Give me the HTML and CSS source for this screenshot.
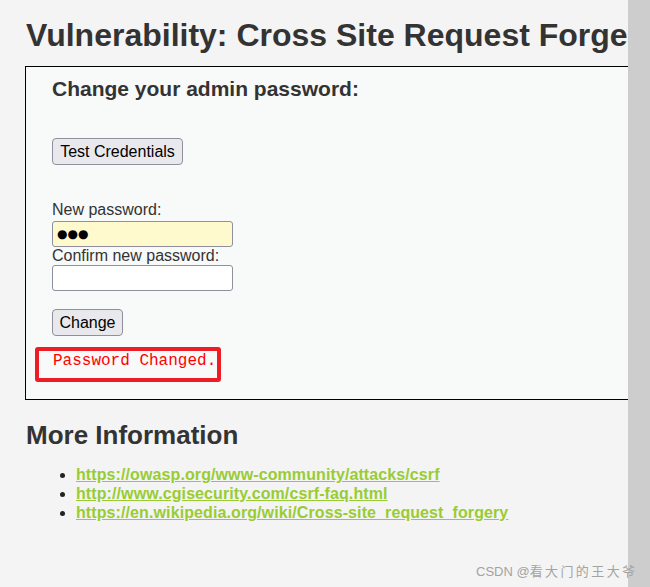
FILE: index.html
```html
<!DOCTYPE html>
<html>
<head>
<meta charset="utf-8">
<link rel="stylesheet" href="styles.css">
</head>
<body>
<div class="layout">
  <div class="main">
    <h1 class="title">Vulnerability: Cross Site Request Forgery (CSRF)</h1>
    <div class="vulnerable">
      <form class="form">
        <h3 class="subtitle">Change your admin password:</h3>
        <button class="btn btn-test" type="button">Test Credentials</button>
        <label class="field-label">New password:</label>
        <input class="field field-filled" type="text" value="●●●">
        <label class="field-label">Confirm new password:</label>
        <input class="field" type="password">
        <button class="btn btn-change" type="button">Change</button>
      </form>
      <div class="result"><pre class="result-text">Password Changed.</pre></div>
    </div>
    <h2 class="more">More Information</h2>
    <ul class="links">
      <li><a href="#">https://owasp.org/www-community/attacks/csrf</a></li>
      <li><a href="#">http://www.cgisecurity.com/csrf-faq.html</a></li>
      <li><a href="#">https://en.wikipedia.org/wiki/Cross-site_request_forgery</a></li>
    </ul>
  </div>
  <div class="scrollbar"></div>
</div>
<div class="watermark">CSDN @<span class="cjk">看大门的王大爷</span></div>
</body>
</html>
```
FILE: styles.css
```css
html, body {
  margin: 0;
  padding: 0;
  background: #f4f4f4;
  height: 100%;
  overflow: hidden;
}
body {
  font-family: "Liberation Sans", Arial, sans-serif;
  color: #333;
}
.layout {
  display: flex;
  height: 587px;
}
.main {
  width: 628px;
  flex: 0 0 628px;
  overflow: hidden;
  padding-left: 25px;
  box-sizing: border-box;
}
.scrollbar {
  flex: 0 0 22px;
  background: #cdcdcd;
}
.title {
  margin: 17px 0 0 1px;
  font-size: 32px;
  line-height: 37px;
  font-weight: bold;
  white-space: nowrap;
  color: #333;
}
.vulnerable {
  margin-top: 12px;
  width: 700px;
  border: 1px solid #000;
  background: #f8f9f9;
  padding: 10px 0 17px 9px;
  box-sizing: border-box;
}
.form {
  margin: 0;
  padding-left: 17px;
}
.subtitle {
  margin: 0;
  font-size: 21px;
  line-height: 24px;
  font-weight: bold;
  color: #333;
}
.btn {
  display: block;
  height: 27px;
  padding: 0 6px;
  font-family: "Liberation Sans", Arial, sans-serif;
  font-size: 16px;
  color: #000;
  background: #e9e9ed;
  border: 1px solid #8f8f9d;
  border-radius: 4px;
  box-sizing: border-box;
}
.btn-test {
  margin-top: 37px;
  width: 131px;
}
.btn-change {
  margin-top: 18px;
  width: 71px;
}
.field-label {
  display: block;
  font-size: 16px;
  line-height: 18px;
  color: #333;
}
.btn-test + .field-label {
  margin-top: 36px;
}
.field {
  display: block;
  width: 181px;
  height: 26px;
  margin: 0;
  padding: 0 4px;
  border: 1px solid #8f8f9d;
  border-radius: 3px;
  background: #fff;
  box-sizing: border-box;
  font-size: 16px;
  font-family: "Liberation Sans", Arial, sans-serif;
}
.field-filled {
  margin-top: 2px;
  background: #fffacd;
  font-family: "DejaVu Sans", sans-serif;
  font-size: 12px;
  color: #000;
}
.result {
  margin-top: 11px;
  width: 186px;
  height: 35px;
  border: 4px solid #ee1c25;
  border-radius: 3px;
  box-sizing: border-box;
  padding: 0 0 0 14px;
}
.result-text {
  margin: 0;
  font-family: "Liberation Mono", "Courier New", monospace;
  font-size: 16px;
  line-height: 20px;
  color: #ff0000;
}
.more {
  margin: 20px 0 0 1px;
  font-size: 26px;
  line-height: 30px;
  font-weight: bold;
  color: #333;
}
.links {
  margin: 15px 0 0;
  padding-left: 51px;
  font-size: 16px;
  line-height: 19px;
  font-weight: bold;
  color: #222;
  letter-spacing: 0.1px;
}
.links a {
  color: #99cc33;
  text-decoration: underline;
}
.watermark {
  position: absolute;
  left: 476px;
  top: 562px;
  font-family: "Liberation Sans", Arial, "Noto Sans CJK SC", sans-serif;
  font-size: 13px;
  line-height: 18px;
  color: #a3a3a3;
  white-space: nowrap;
}
.cjk {
  font-family: "Noto Sans CJK SC", sans-serif;
  letter-spacing: 2.4px;
}
```
